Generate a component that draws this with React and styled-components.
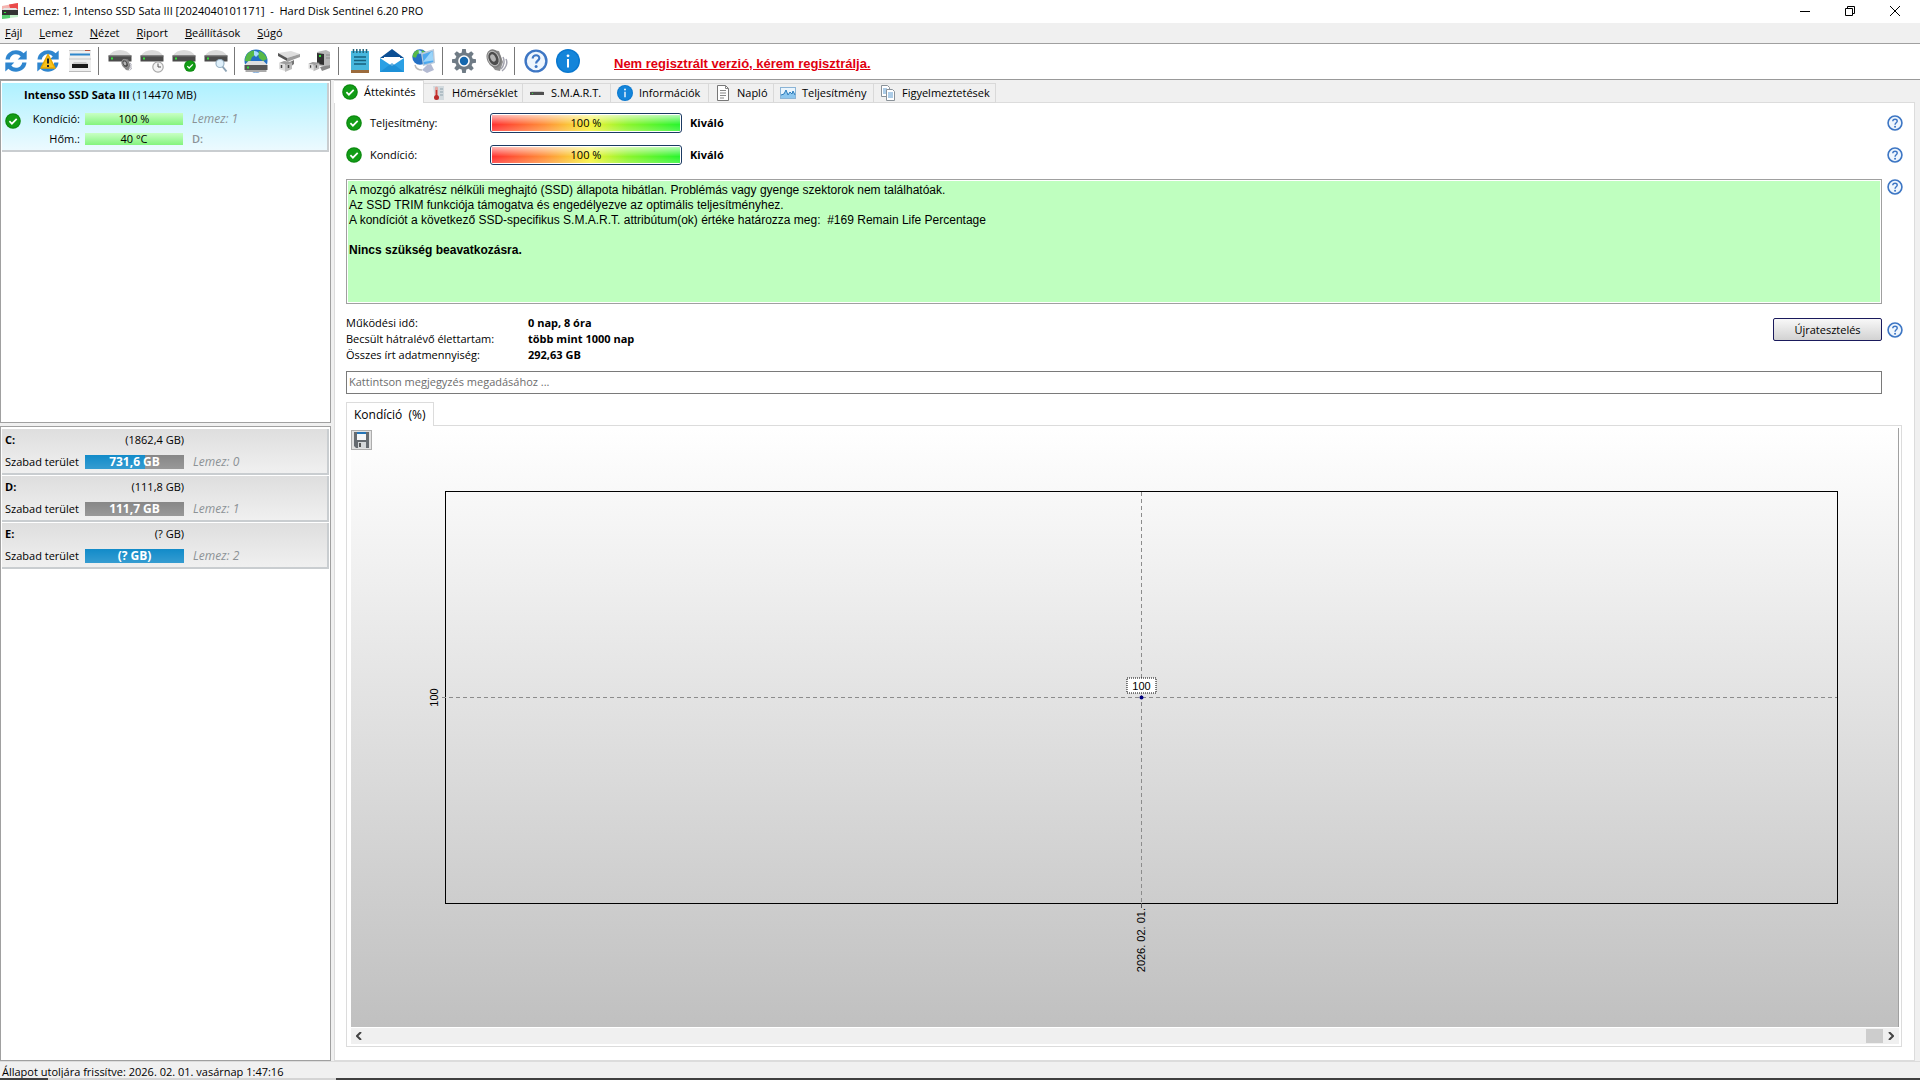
// NPM
import React from 'react';
import styled, { createGlobalStyle, css } from 'styled-components';

// STYLES
const GlobalStyle = createGlobalStyle`
  * {
    box-sizing: border-box;
  }

  body {
    margin: 0;
    background: #f0f0f0;
    color: #000;
    font-family: 'Open Sans', 'Noto Sans', sans-serif;
    font-size: 11px;
    line-height: 16px;
  }

  button,
  input {
    font: inherit;
    color: inherit;
  }

  svg {
    display: block;
    flex: none;
  }
`;

const Window = styled.div`
  min-height: 100vh;
  display: flex;
  flex-direction: column;
`;

const TitleBar = styled.header`
  height: 23px;
  padding: 0 3px 2px 2px;
  display: flex;
  align-items: center;
  background: #fff;
`;

const Title = styled.h1`
  flex: 1;
  margin: 0;
  padding-left: 5px;
  font-size: 11px;
  font-weight: 400;
  white-space: pre;
`;

const WindowButton = styled.button`
  width: 45px;
  height: 20px;
  padding: 0;
  border: 0;
  background: none;
  display: flex;
  align-items: center;
  justify-content: center;
`;

const MenuBar = styled.nav`
  height: 21px;
  padding-left: 5px;
  display: flex;
  align-items: center;
  gap: 17px;
  border-bottom: 1px solid #a0a0a0;
`;

const MenuItem = styled.button`
  padding: 0;
  border: 0;
  background: none;

  &::first-letter {
    text-decoration: underline;
  }
`;

const ToolBar = styled.div`
  height: 36px;
  padding-bottom: 1px;
  display: flex;
  align-items: center;
  background: #fff;
  border-bottom: 1px solid #999;
`;

const ToolButton = styled.button`
  width: 32px;
  height: 32px;
  padding: 4px;
  border: 0;
  background: none;
`;

const ToolSeparator = styled.div`
  width: 8px;
  height: 28px;
  padding-left: 2px;

  &::before {
    content: '';
    display: block;
    width: 1px;
    height: 100%;
    background: #777;
  }
`;

const RegisterLink = styled.a`
  margin-left: 30px;
  padding-top: 6px;
  color: #e1000f;
  font: bold 13px/16px 'Liberation Sans', Arial, sans-serif;
`;

const Body = styled.main`
  flex: 1;
  display: flex;
  gap: 3px;
  padding-right: 5px;
`;

const Side = styled.aside`
  width: 331px;
  flex: none;
  display: flex;
  flex-direction: column;
  gap: 3px;
`;

const SideList = styled.section`
  ${props => (props.$grow ? 'flex: 1;' : 'height: 343px;')}
  padding: 2px 1px;
  display: flex;
  flex-direction: column;
  gap: 1px;
  border: 1px solid #a0a0a0;
  background: #fff;
`;

const card = css`
  border-right: 2px solid #c9cdd0;
  border-bottom: 2px solid #c9cdd0;
`;

const DiskCard = styled.article`
  ${card}
  height: 69px;
  padding: 2px 3px;
  display: grid;
  grid-template-columns: 16px 54px 98px 1fr;
  grid-template-rows: 24px 20px 20px;
  column-gap: 5px;
  align-items: center;
  background: linear-gradient(#aef1ff, #ecfaff);
`;

const DiskName = styled.div`
  grid-column: 1 / -1;
  align-self: start;
  padding: 2px 0 0 19px;
`;

const DiskState = styled.div`
  grid-row: 2 / 4;
  padding-bottom: 16px;
`;

const RightLabel = styled.div`
  text-align: right;
  white-space: nowrap;
`;

const MiniBar = styled.div`
  height: 12px;
  line-height: 12px;
  text-align: center;
  background: linear-gradient(#c8ffc4, #84f47d);
`;

const Muted = styled.span`
  padding-left: 4px;
  color: #8c9296;
  ${props => (props.$italic ? 'font-size: 12px; font-style: italic;' : 'font-weight: 600;')}
`;

const VolumeCard = styled.article`
  ${card}
  height: 46px;
  padding: 0 3px;
  display: grid;
  grid-template-columns: 75px 99px 1fr;
  grid-template-rows: 21px 23px;
  column-gap: 5px;
  align-items: center;
  background: linear-gradient(#dedede, #f0f0f0);
  white-space: nowrap;
`;

const VolumeBar = styled.div`
  height: 14px;
  line-height: 14px;
  text-align: center;
  font-size: 12px;
  font-weight: 700;
  color: #fff;
  background:
    linear-gradient(transparent, rgba(255, 255, 255, 0.15)),
    linear-gradient(90deg, #128bc9 ${props => props.$used}%, #878787 ${props => props.$used}%);
`;

const Content = styled.div`
  flex: 1;
  min-width: 0;
  display: flex;
  flex-direction: column;
`;

const Tabs = styled.div`
  height: 23px;
  display: flex;
  align-items: flex-end;
  box-shadow: inset 0 -1px #dcdcdc;
`;

const Tab = styled.button`
  width: ${props => props.$width}px;
  height: ${props => (props.$active ? 23 : 20)}px;
  padding: 0 0 0 ${props => (props.$active ? 8 : 6)}px;
  display: flex;
  align-items: center;
  gap: 6px;
  border: solid #d9d9d9;
  border-width: 1px 1px ${props => (props.$active ? 0 : 1)}px 0;
  background: ${props => (props.$active ? '#fff' : '#f0f0f0')};
  white-space: nowrap;
`;

const Page = styled.section`
  flex: 1;
  padding: 4px 11px 13px;
  display: flex;
  flex-direction: column;
  border: 1px solid #dcdcdc;
  border-top: 0;
  background: #fff;
`;

const MetricRow = styled.div`
  height: 32px;
  display: grid;
  grid-template-columns: 16px 112px 192px 1fr 16px;
  column-gap: 8px;
  align-items: center;
`;

const Gauge = styled.div`
  height: 20px;
  padding: 1px;
  border: 1px solid #1b3a63;
  border-radius: 3px;
`;

const GaugeFill = styled.div`
  height: 16px;
  line-height: 16px;
  text-align: center;
  background:
    linear-gradient(rgba(255, 255, 255, 0.65), transparent 60%, rgba(255, 255, 255, 0.2)),
    linear-gradient(90deg, #ff3030, #ff9038 28%, #f7f238 52%, #8df52c 72%, #27f52d);
`;

const WithHelp = styled.div`
  margin-top: ${props => props.$gap}px;
  display: grid;
  grid-template-columns: 1fr 16px;
  column-gap: 5px;
  align-items: start;
`;

const HelpButton = styled.button`
  width: 16px;
  height: 16px;
  padding: 0;
  border: 0;
  background: none;
`;

const Report = styled.div`
  height: 125px;
  padding: 3px 2px;
  border: 1px solid #a0a0a0;
  box-shadow: inset 0 0 0 1px #fff;
  background: #bfffbf;
  font: 12px/15px 'Liberation Sans', Arial, sans-serif;
  white-space: pre-wrap;
`;

const Stats = styled.div`
  margin-top: 11px;
  display: flex;
  justify-content: space-between;
  align-items: flex-start;
`;

const StatList = styled.dl`
  margin: 0;
  display: grid;
  grid-template-columns: 182px auto;
  line-height: 16px;

  dd {
    margin: 0;
    font-weight: 700;
  }
`;

const Retest = styled.div`
  padding-top: 3px;
  display: flex;
  align-items: center;
  gap: 5px;
`;

const RetestButton = styled.button`
  width: 109px;
  height: 23px;
  padding: 0;
  border: 1px solid #1a1a5c;
  border-radius: 2px;
  background: linear-gradient(#f8f8f8, #d2d2d2);
`;

const Comment = styled.input`
  width: 100%;
  height: 23px;
  padding: 0 2px 2px;
  border: 1px solid #7a7a7a;
  background: #fff;

  &::placeholder {
    color: #6d6d6d;
    opacity: 1;
  }
`;

const ChartTab = styled.button`
  align-self: flex-start;
  position: relative;
  height: 24px;
  margin: 8px 0 -1px;
  padding: 0 7px;
  border: 1px solid #dcdcdc;
  border-bottom: 0;
  background: #fff;
  font-size: 12px;
  white-space: pre;
`;

const ChartPanel = styled.div`
  flex: 1;
  margin-right: 1px;
  padding: 2px 2px 2px 4px;
  display: flex;
  flex-direction: column;
  border: 1px solid #dcdcdc;
`;

const Chart = styled.div`
  flex: 1;
  display: flex;
  flex-direction: column;
  align-items: flex-start;
  padding-top: 2px;
  border-right: 1px solid #a0a0a0;
  background: linear-gradient(#fff, #c0c0c0);
`;

const SaveButton = styled.button`
  width: 21px;
  height: 20px;
  padding: 1px 2px;
  border: 1px solid #adadad;
  background: #e1e1e1;
`;

const Plot = styled.div`
  flex: 1;
  align-self: stretch;
  display: flex;
  margin: 41px 60px 123px 94px;
  border: 1px solid #000;

  > svg {
    width: 100%;
    height: auto;
    flex: 1;
    overflow: visible;
    font: 11px 'Liberation Sans', Arial, sans-serif;
  }

  svg svg {
    overflow: visible;
  }
`;

const ScrollBar = styled.div`
  height: 16px;
  margin-top: 1px;
  display: flex;
  justify-content: space-between;
  align-items: center;
  background: #f0f0f0;
`;

const ScrollArrow = styled.button`
  width: 16px;
  height: 14px;
  padding: 0;
  border: 0;
  background: none;
  display: flex;
  align-items: center;
  justify-content: center;
`;

const ScrollThumb = styled.div`
  width: 17px;
  height: 14px;
  margin-left: auto;
  background: #cdcdcd;
`;

const StatusBar = styled.footer`
  height: 17px;
  padding: 4px 2px 0;
  display: flex;
  align-items: center;
  border-top: 1px solid #dcdcdc;
`;

const BottomEdge = styled.div`
  height: 2px;
  background: linear-gradient(90deg, #404040 48px, #d4d4d4 48px 336px, #404040 336px);
`;

// ICONS
const Check = ({ x = 0, y = 0, size = 16 }) => (
  <svg x={x} y={y} width={size} height={size} viewBox="0 0 16 16">
    <circle cx="8" cy="8" r="7.8" fill="#0c8a10" />
    <circle cx="8" cy="8" r="6.6" fill="#129c16" />
    <path d="M4.4 8.2l2.5 2.5 4.8-4.9" fill="none" stroke="#fff" strokeWidth="1.7" />
  </svg>
);

const Help = ({ size = 16 }) => (
  <svg width={size} height={size} viewBox="0 0 24 24">
    <circle cx="12" cy="12" r="10.4" fill="#eff6fd" stroke="#3d76c4" strokeWidth="2.4" />
    <path d="M8.7 9.4c0-4.3 6.9-4.1 6.6-.1-.2 2.3-3.2 2.4-3.2 5.2" fill="none" stroke="#3d76c4" strokeWidth="2.2" />
    <circle cx="12.1" cy="17.6" r="1.5" fill="#3d76c4" />
  </svg>
);

const Info = ({ size = 24 }) => (
  <svg width={size} height={size} viewBox="0 0 24 24">
    <circle cx="12" cy="12" r="12" fill="#0a78cf" />
    <circle cx="12" cy="12" r="10.5" fill="#1485da" />
    <circle cx="12" cy="6.8" r="1.4" fill="#fff" />
    <path d="M12 10v8.5" stroke="#fff" strokeWidth="2" />
  </svg>
);

const Sync = ({ warning }) => (
  <svg width="24" height="24" viewBox="0 0 24 24">
    <g fill="#2f86cf">
      <path d="M1.5 10.5C2 4.7 7 1.3 12 1.3c3.3 0 5.7 1 7.6 2.9l3.1-2.7v9h-9l3-3.1C15.4 6 13.9 5.2 12 5.2c-3.3 0-5.7 2-6.2 5.3z" />
      <path d="M22.5 13.5C22 19.3 17 22.7 12 22.7c-3.3 0-5.7-1-7.6-2.9l-3.1 2.7v-9h9l-3 3.1c1.3 1.4 2.8 2.2 4.7 2.2 3.3 0 5.7-2 6.2-5.3z" />
    </g>
    {warning && (
      <g>
        <path d="M12 5.5l7 13.5H5z" fill="#f9c31c" stroke="#e8a800" strokeWidth="1.5" strokeLinejoin="round" />
        <path d="M12 9.5v5M12 16v2" stroke="#222" strokeWidth="2" />
      </g>
    )}
  </svg>
);

const Panels = () => (
  <svg width="24" height="24" viewBox="0 0 24 24">
    <rect x="1" y="1" width="22" height="22" fill="#eee" />
    <path d="M1 1.5h22" stroke="#c9c9c9" />
    <path d="M17 1.5h5" stroke="#b5533c" />
    <path d="M2 5.5h20" stroke="#2d86cc" strokeWidth="2" />
    <path d="M1 10h22" stroke="#c4c4c4" />
    <path d="M6 13h12l2 2H4z" fill="#ccc" />
    <rect x="4" y="15" width="16" height="4" fill="#1b1b1b" />
    <path d="M1 22.5h22" stroke="#bbb" />
  </svg>
);

const DriveBase = () => (
  <g>
    <path d="M.5 7C3 3 7 1 12 1s9 2 11.5 6z" fill="#dadada" />
    <rect x=".5" y="6.5" width="23" height="6" fill="#4b4b4b" />
    <rect x=".5" y="6.5" width="23" height="1" fill="#777" />
    <rect x="3" y="8.5" width="2" height="2" fill="#35e03b" />
  </g>
);

const Speaker = () => (
  <g>
    <path d="M5 13l6 8 5 1 3-9-4-11-7-1z" fill="#8f8f8f" />
    <ellipse cx="10" cy="9.5" rx="7" ry="9.5" transform="rotate(-25 10 9.5)" fill="#7c7c7c" />
    <ellipse cx="9.5" cy="9.5" rx="5.2" ry="7.5" transform="rotate(-25 9.5 9.5)" fill="#4c4c4c" stroke="#bdbdbd" />
    <ellipse cx="9" cy="9" rx="2.5" ry="3.8" transform="rotate(-25 9 9)" fill="#b4b4b4" />
    <path d="M19 8c2 4 1 9-2 12M22 10c2 4 0 9-4 12" fill="none" stroke="#a2a2ae" strokeWidth="1.5" />
  </g>
);

const Drive = ({ badge }) => (
  <svg width="24" height="24" viewBox="0 0 24 24">
    <DriveBase />
    {badge === 'sound' && (
      <svg x="12" y="9.5" width="13" height="13" viewBox="0 0 24 24">
        <Speaker />
      </svg>
    )}
    {badge === 'clock' && (
      <g>
        <circle cx="18" cy="18" r="5.2" fill="#f4f4f4" stroke="#a9a9a9" strokeWidth="1.2" />
        <path d="M18 14.5V18h3" fill="none" stroke="#555" />
      </g>
    )}
    {badge === 'check' && <Check x={12} y={11} size={12} />}
    {badge === 'search' && (
      <g>
        <path d="M18.5 17.5l4 5" stroke="#8da3b5" strokeWidth="2" />
        <circle cx="16" cy="14.5" r="4" fill="#dff0fb" stroke="#9bb4c6" strokeWidth="1.2" />
      </g>
    )}
  </svg>
);

const Globe = () => (
  <g>
    <circle cx="12" cy="12" r="11.5" fill="#2470c4" />
    <path d="M4 4c3-2 5-3 7-2l1 4-4 2-2 5-5-1c0-3 1-6 3-8zM15 2c4 1 7 4 8 8l-4 2-4-3-1-4z" fill="#57b947" />
    <path d="M10 2c3 0 4 1 5 3l-3 3-2-2z" fill="#a9dcff" />
  </g>
);

const GlobeDrive = () => (
  <svg width="24" height="24" viewBox="0 0 24 24">
    <Globe />
    <path d="M4.5 12h15l4 4H.5z" fill="#dedede" />
    <rect x=".5" y="16" width="23" height="5" fill="#565656" />
    <path d="M1.5 22h21" stroke="#aaa" strokeWidth="2" />
    <rect x="3" y="17.5" width="2" height="2" fill="#35e03b" />
  </svg>
);

const Plug = () => (
  <g>
    <path d="M3 14l5-2 8 1v2l-7 2z" fill="#9d9d9d" />
    <path d="M3 14l6 1v7l-6-2z" fill="#dedede" />
    <path d="M9 16l7-2v6l-7 3z" fill="#bcbcbc" />
    <path d="M5.5 16v3M12.5 16v3" stroke="#444" strokeWidth="1.5" />
  </g>
);

const DriveCable = () => (
  <svg width="24" height="24" viewBox="0 0 24 24">
    <path d="M2 4l13-2 9 3-13 4z" fill="#dedede" />
    <path d="M2 4l9 5v3L2 7z" fill="#555" />
    <path d="M11 9l13-4v3l-13 5z" fill="#9c9c9c" />
    <path d="M12 14l6-3v4l-4 3z" fill="#777" />
    <Plug />
  </svg>
);

const TowerCable = () => (
  <svg width="24" height="24" viewBox="0 0 24 24">
    <path d="M9 3l9-2 4 2v13l-6 2-7-2z" fill="#b8b8b8" />
    <path d="M9 4l7 1v11l-7-1z" fill="#303030" />
    <path d="M18 6h4M18 9h4" stroke="#8a8a8a" />
    <rect x="11" y="6" width="2" height="2" fill="#35e03b" />
    <path d="M12 18l10-2v3l-8 3z" fill="#888" />
    <svg x="-2" y="2" width="20" height="22" viewBox="0 0 24 24">
      <Plug />
    </svg>
  </svg>
);

const Notebook = () => (
  <svg width="24" height="24" viewBox="0 0 24 24">
    <rect x="3" y="2" width="18" height="20" fill="#47b7dd" />
    <path d="M5.5 0v4M8.8 0v4M12 0v4M15.2 0v4M18.5 0v4" stroke="#24657c" strokeWidth="1.5" />
    <path d="M6 8h12M6 11.5h12M6 15h12" stroke="#17627e" strokeWidth="1.5" />
    <path d="M3 22.5h18" stroke="#9b6b3c" strokeWidth="3" />
  </svg>
);

const Mail = () => (
  <svg width="24" height="24" viewBox="0 0 24 24">
    <path d="M0 9L12 0l12 9z" fill="#0c4f94" />
    <path d="M4 8h16v9H4z" fill="#fff" />
    <path d="M0 9l12 8 12-8v14H0z" fill="#2ba0e4" />
    <path d="M0 23l12-9 12 9z" fill="#1687cf" opacity=".65" />
  </svg>
);

const Network = () => (
  <svg width="24" height="24" viewBox="0 0 24 24">
    <svg width="16" height="16" viewBox="0 0 24 24">
      <Globe />
    </svg>
    <path d="M9 4l13-4 1 14-12 3z" fill="#b9c9da" />
    <path d="M10.5 5.5l10-3.5.8 11-9.5 2.5z" fill="#4fa9ee" />
    <path d="M11 13l8-10 1.5-.5.8 9z" fill="#9bd5fa" />
    <path d="M15 16l4-1 3 6-7 3-5-3z" fill="#b3bad2" />
    <path d="M3 16c1 4 3 5 7 5" fill="none" stroke="#bbb" strokeWidth="1.5" />
  </svg>
);

const teeth = [0, 45, 90, 135, 180, 225, 270, 315];

const Gear = () => (
  <svg width="24" height="24" viewBox="0 0 24 24">
    {teeth.map(angle => (
      <path key={angle} d="M9.5 5L10.2 0h3.6l.7 5z" transform={`rotate(${angle} 12 12)`} fill="#6f7b85" />
    ))}
    <circle cx="12" cy="12" r="8.8" fill="#6f7b85" />
    <circle cx="12" cy="12" r="5.8" fill="#fff" />
    <circle cx="12" cy="12" r="4.2" fill="#1568ae" />
  </svg>
);

const Sound = () => (
  <svg width="24" height="24" viewBox="0 0 24 24">
    <Speaker />
  </svg>
);

const Thermometer = () => (
  <svg width="16" height="16" viewBox="0 0 16 16">
    <path d="M3 1h11v14H5z" fill="#d3dade" />
    <path d="M10 4h3M10 7h3M10 10h3" stroke="#8fa3ad" />
    <path d="M5 3a1.5 1.5 0 013 0v8H5z" fill="#e3a9a4" />
    <path d="M6.5 5v7" stroke="#c4332f" strokeWidth="1.5" />
    <circle cx="6.5" cy="12.5" r="2.5" fill="#bb2a2a" />
  </svg>
);

const SmartDrive = () => (
  <svg width="16" height="16" viewBox="0 0 16 16">
    <path d="M3 6h10l2 1H1z" fill="#ccc" />
    <rect x="1" y="7" width="14" height="3" fill="#505050" />
    <rect x="3" y="8" width="1" height="1" fill="#35e03b" />
  </svg>
);

const Log = () => (
  <svg width="16" height="16" viewBox="0 0 16 16">
    <path d="M2.5.5h8l3 3v12h-11z" fill="#fff" stroke="#777" />
    <path d="M10.5.5v3h3M5 5.5h6M5 8h6M5 10.5h6M5 13h4" fill="none" stroke="#888" />
  </svg>
);

const Graph = () => (
  <svg width="16" height="16" viewBox="0 0 16 16">
    <rect x=".5" y="2.5" width="15" height="11" fill="#eaf5fd" stroke="#8bb4d6" />
    <path d="M1 10l3-1 2-4 2 5 2-3 2 2 1-3 2 4v3H1z" fill="#8cc6ee" />
    <path d="M1 10l3-1 2-4 2 5 2-3 2 2 1-3 2 4" fill="none" stroke="#2c7dbd" />
  </svg>
);

const Copies = () => (
  <svg width="16" height="16" viewBox="0 0 16 16">
    <path d="M1.5.5h6l2 2v9h-8z" fill="#fff" stroke="#8a9299" />
    <path d="M3 4h4M3 6h3M3 8h3" stroke="#5d9bd0" />
    <path d="M6.5 4.5h6l2 2v9h-8z" fill="#fff" stroke="#8a9299" />
    <path d="M8 8h5M8 10h5M8 12h5" stroke="#5d9bd0" />
  </svg>
);

const Floppy = () => (
  <svg width="15" height="16" viewBox="0 0 15 16">
    <path d="M0 0h15v16H2l-2-2z" fill="#666b70" />
    <rect x="3" y="0" width="9" height="8" fill="#f4f6f8" />
    <rect x="3" y="0" width="9" height="2" fill="#2374b8" />
    <rect x="4" y="10" width="8" height="6" fill="#d5d8da" />
    <rect x="5" y="11" width="2" height="4" fill="#555" />
  </svg>
);

const AppIcon = () => (
  <svg width="16" height="16" viewBox="0 0 16 16">
    <path d="M0 3L16 0v8H0z" fill="#f4b4b0" />
    <path d="M7 1.5L16 0v8H9z" fill="#ea4a4a" />
    <path d="M0 11h16v3L0 16z" fill="#c4f0ca" />
    <path d="M0 11h8v4l-8 1z" fill="#59cf72" />
    <path d="M2 5h12l2 2H0z" fill="#e2e2e2" />
    <rect y="7" width="16" height="5" fill="#333" />
    <rect x="2" y="9" width="2" height="1" fill="#35e03b" />
  </svg>
);

// DATA
const menu = ['Fájl', 'Lemez', 'Nézet', 'Riport', 'Beállítások', 'Súgó'];

const tools = [
  [
    ['Frissítés', <Sync />],
    ['Figyelmeztetések frissítése', <Sync warning />],
    ['Nézet váltása', <Panels />],
  ],
  [
    ['Zajszint', <Drive badge="sound" />],
    ['Rövid teszt', <Drive badge="clock" />],
    ['Teljes teszt', <Drive badge="check" />],
    ['Felületi teszt', <Drive badge="search" />],
  ],
  [
    ['Online adatok', <GlobeDrive />],
    ['Lemez csatlakozás', <DriveCable />],
    ['Gép csatlakozás', <TowerCable />],
  ],
  [
    ['Riport', <Notebook />],
    ['Riport küldése', <Mail />],
    ['Hálózat', <Network />],
  ],
  [
    ['Beállítások', <Gear />],
    ['Hangok', <Sound />],
  ],
  [
    ['Súgó', <Help size={24} />],
    ['Névjegy', <Info />],
  ],
];

const volumes = [
  { name: 'C:', size: '(1862,4 GB)', free: '731,6 GB', disk: 0, used: 61 },
  { name: 'D:', size: '(111,8 GB)', free: '111,7 GB', disk: 1, used: 0 },
  { name: 'E:', size: '(? GB)', free: '(? GB)', disk: 2, used: 100 },
];

const tabs = [
  { label: 'Áttekintés', icon: <Check />, width: 90 },
  { label: 'Hőmérséklet', icon: <Thermometer />, width: 99 },
  { label: 'S.M.A.R.T.', icon: <SmartDrive />, width: 88 },
  { label: 'Információk', icon: <Info size={16} />, width: 98 },
  { label: 'Napló', icon: <Log />, width: 65 },
  { label: 'Teljesítmény', icon: <Graph />, width: 100 },
  { label: 'Figyelmeztetések', icon: <Copies />, width: 122 },
];

const HelpLink = () => (
  <HelpButton aria-label="Súgó">
    <Help />
  </HelpButton>
);

const Metric = ({ label }) => (
  <MetricRow>
    <Check />
    <span>{label}</span>
    <Gauge>
      <GaugeFill>100 %</GaugeFill>
    </Gauge>
    <b>Kiváló</b>
    <HelpLink />
  </MetricRow>
);

const ConditionPlot = () => (
  <Plot>
    <svg>
      <g stroke="#8c8c8c" strokeDasharray="4 3" shapeRendering="crispEdges">
        <line x1="-4" y1="50%" x2="100%" y2="50%" />
        <line x1="50%" y1="0" x2="50%" y2="100%" />
      </g>
      <svg x="50%" y="50%">
        <rect x="-14.5" y="-19.5" width="29" height="15" fill="#fff" stroke="#000" strokeDasharray="1 1" />
        <text x="0" y="-8" textAnchor="middle">100</text>
        <circle r="2" fill="#000080" />
      </svg>
      <svg x="0" y="50%">
        <text transform="translate(-8 0) rotate(-90)" textAnchor="middle">100</text>
      </svg>
      <svg x="50%" y="100%">
        <path d="M0 0v5" stroke="#555" />
        <text transform="translate(3 5) rotate(-90)" textAnchor="end">2026. 02. 01.</text>
      </svg>
    </svg>
  </Plot>
);

// MODULE
export default function App() {
  return (
    <Window>
      <GlobalStyle />
      <TitleBar>
        <AppIcon />
        <Title>{'Lemez: 1, Intenso SSD Sata III [2024040101171]  -  Hard Disk Sentinel 6.20 PRO'}</Title>
        <WindowButton aria-label="Kis méret">
          <svg width="10" height="10"><path d="M0 5.5h10" stroke="#000" /></svg>
        </WindowButton>
        <WindowButton aria-label="Előző méret">
          <svg width="10" height="10" fill="none" stroke="#000">
            <path d="M.5 2.5h7v7h-7zM2.5 2.5v-2h7v7h-2" />
          </svg>
        </WindowButton>
        <WindowButton aria-label="Bezárás">
          <svg width="10" height="10" stroke="#000"><path d="M0 0l10 10M10 0L0 10" /></svg>
        </WindowButton>
      </TitleBar>
      <MenuBar>
        {menu.map(item => <MenuItem key={item}>{item}</MenuItem>)}
      </MenuBar>
      <ToolBar>
        {tools.map((group, i) => (
          <React.Fragment key={group[0][0]}>
            {i > 0 && <ToolSeparator />}
            {group.map(([label, icon]) => (
              <ToolButton key={label} aria-label={label}>{icon}</ToolButton>
            ))}
          </React.Fragment>
        ))}
        <RegisterLink href="#register">Nem regisztrált verzió, kérem regisztrálja.</RegisterLink>
      </ToolBar>

      <Body>
        <Side>
          <SideList>
            <DiskCard>
              <DiskName><b>Intenso SSD Sata III</b> (114470 MB)</DiskName>
              <DiskState><Check /></DiskState>
              <RightLabel>Kondíció:</RightLabel>
              <MiniBar>100 %</MiniBar>
              <Muted $italic>Lemez: 1</Muted>
              <RightLabel>Hőm.:</RightLabel>
              <MiniBar>40 °C</MiniBar>
              <Muted>D:</Muted>
            </DiskCard>
          </SideList>
          <SideList $grow>
            {volumes.map(volume => (
              <VolumeCard key={volume.name}>
                <b>{volume.name}</b>
                <RightLabel>{volume.size}</RightLabel>
                <span />
                <span>Szabad terület</span>
                <VolumeBar $used={volume.used}>{volume.free}</VolumeBar>
                <Muted $italic>Lemez: {volume.disk}</Muted>
              </VolumeCard>
            ))}
          </SideList>
        </Side>

        <Content>
          <Tabs role="tablist">
            {tabs.map((tab, i) => (
              <Tab key={tab.label} role="tab" aria-selected={i === 0} $active={i === 0} $width={tab.width}>
                {tab.icon}
                {tab.label}
              </Tab>
            ))}
          </Tabs>
          <Page>
            <Metric label="Teljesítmény:" />
            <Metric label="Kondíció:" />
            <WithHelp $gap={8}>
              <Report>
                {'A mozgó alkatrész nélküli meghajtó (SSD) állapota hibátlan. Problémás vagy gyenge szektorok nem találhatóak.\n'}
                {'Az SSD TRIM funkciója támogatva és engedélyezve az optimális teljesítményhez.\n'}
                {'A kondíciót a következő SSD-specifikus S.M.A.R.T. attribútum(ok) értéke határozza meg:  #169 Remain Life Percentage\n\n'}
                <b>Nincs szükség beavatkozásra.</b>
              </Report>
              <HelpLink />
            </WithHelp>
            <Stats>
              <StatList>
                <dt>Működési idő:</dt>
                <dd>0 nap, 8 óra</dd>
                <dt>Becsült hátralévő élettartam:</dt>
                <dd>több mint 1000 nap</dd>
                <dt>Összes írt adatmennyiség:</dt>
                <dd>292,63 GB</dd>
              </StatList>
              <Retest>
                <RetestButton>Újratesztelés</RetestButton>
                <HelpLink />
              </Retest>
            </Stats>
            <WithHelp $gap={8}>
              <Comment aria-label="Megjegyzés" placeholder="Kattintson megjegyzés megadásához ..." />
            </WithHelp>
            <ChartTab>{'Kondíció  (%)'}</ChartTab>
            <ChartPanel>
              <Chart>
                <SaveButton aria-label="Mentés"><Floppy /></SaveButton>
                <ConditionPlot />
              </Chart>
              <ScrollBar>
                <ScrollArrow aria-label="Balra">
                  <svg width="6" height="8" fill="none" stroke="#444" strokeWidth="2"><path d="M5 0L1 4l4 4" /></svg>
                </ScrollArrow>
                <ScrollThumb />
                <ScrollArrow aria-label="Jobbra">
                  <svg width="6" height="8" fill="none" stroke="#444" strokeWidth="2"><path d="M1 0l4 4-4 4" /></svg>
                </ScrollArrow>
              </ScrollBar>
            </ChartPanel>
          </Page>
        </Content>
      </Body>
      <StatusBar>Állapot utoljára frissítve: 2026. 02. 01. vasárnap 1:47:16</StatusBar>
      <BottomEdge />
    </Window>
  );
}
